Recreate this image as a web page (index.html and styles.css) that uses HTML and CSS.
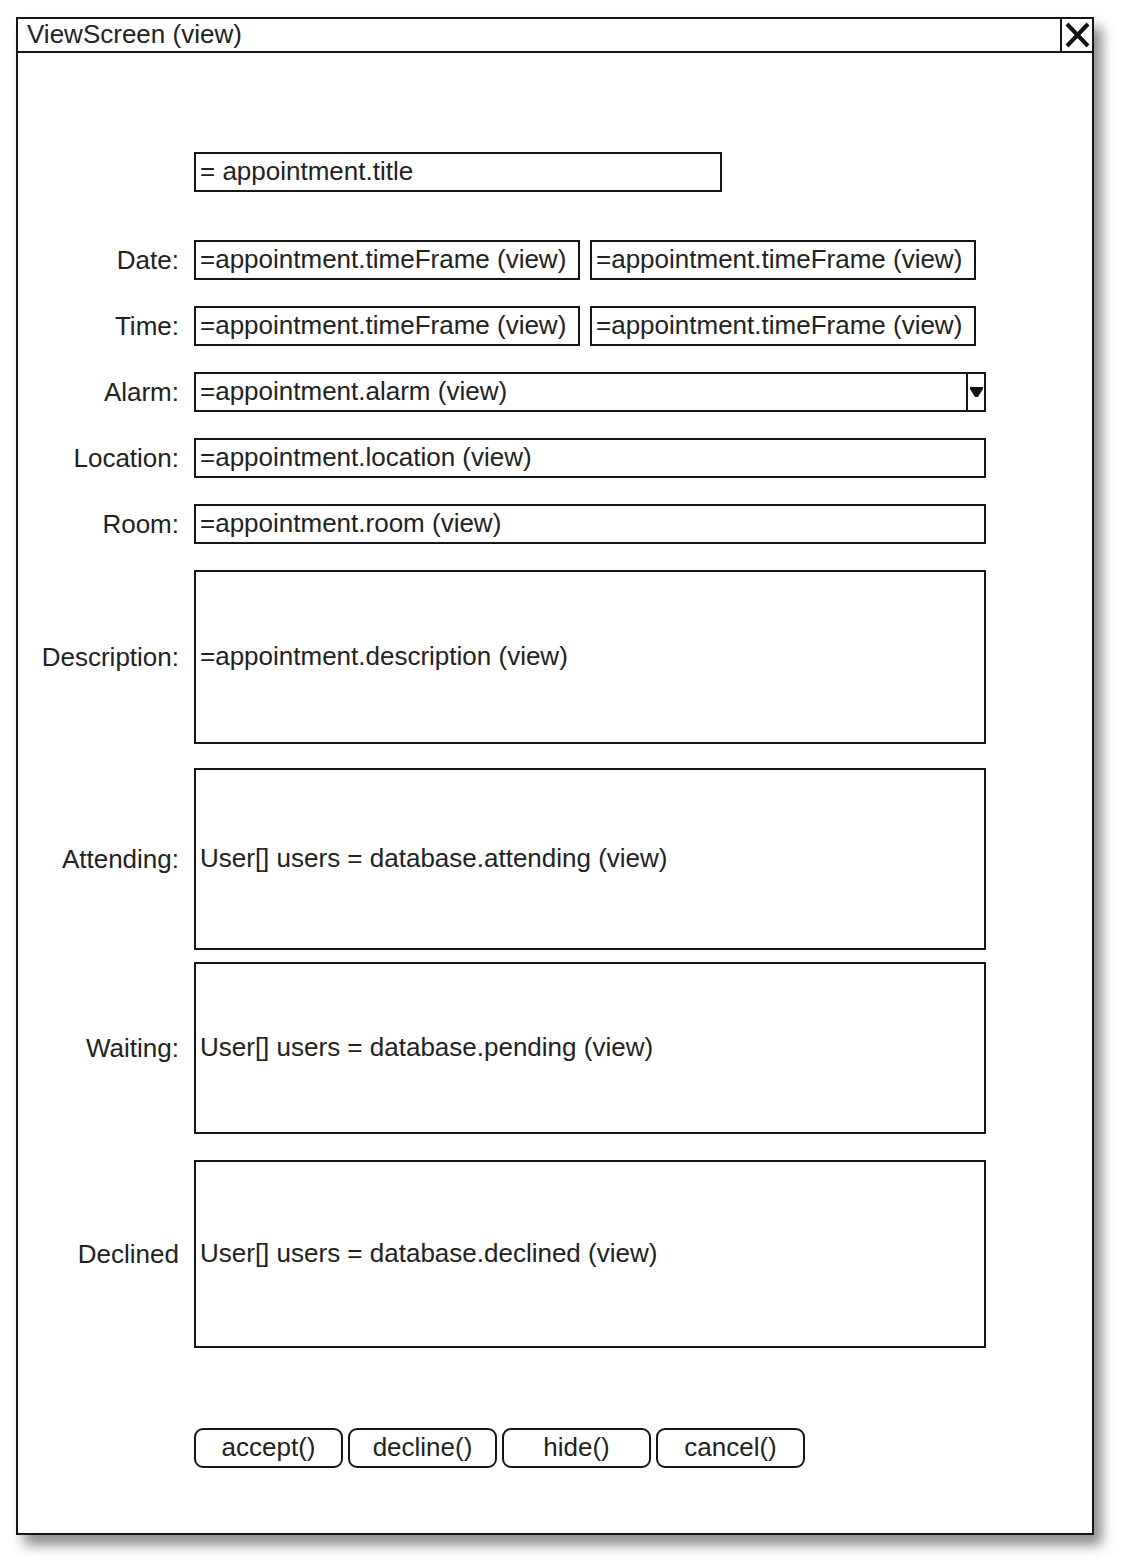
FILE: index.html
```html
<!DOCTYPE html>
<html lang="en">

<head>
    <meta charset="UTF-8">
    <meta name="viewport" content="width=device-width, initial-scale=1.0">
    <title>ViewScreen (view)</title>
    <link rel="stylesheet" href="styles.css">
</head>

<body>
    <div class="window">
        <div class="titlebar">
            <span class="title">ViewScreen (view)</span>
            <div class="close">
                <svg width="30" height="32" viewBox="0 0 30 32">
                    <path d="M5 5 L26 27 M26 5 L5 27" stroke="#111" stroke-width="4" fill="none" />
                </svg>
            </div>
        </div>

        <div class="content">
            <div class="row row-title">
                <span class="label"></span>
                <div class="field field-title">= appointment.title</div>
            </div>
            <div class="row row-date">
                <span class="label">Date:</span>
                <div class="pair">
                    <div class="field">=appointment.timeFrame (view)</div>
                    <div class="field">=appointment.timeFrame (view)</div>
                </div>
            </div>
            <div class="row">
                <span class="label">Time:</span>
                <div class="pair">
                    <div class="field">=appointment.timeFrame (view)</div>
                    <div class="field">=appointment.timeFrame (view)</div>
                </div>
            </div>
            <div class="row">
                <span class="label">Alarm:</span>
                <div class="field field-select">
                    <span class="value">=appointment.alarm (view)</span>
                    <span class="drop">
                        <svg width="13" height="12" viewBox="0 0 13 12">
                            <path d="M0 1 L13 1 L13 3 L8 11 L5 11 L0 3 Z" fill="#111" />
                        </svg>
                    </span>
                </div>
            </div>
            <div class="row">
                <span class="label">Location:</span>
                <div class="field">=appointment.location (view)</div>
            </div>
            <div class="row">
                <span class="label">Room:</span>
                <div class="field">=appointment.room (view)</div>
            </div>
            <div class="row">
                <span class="label">Description:</span>
                <div class="field area area-description">=appointment.description (view)</div>
            </div>
            <div class="row row-attending">
                <span class="label">Attending:</span>
                <div class="field area area-attending">User[] users = database.attending (view)</div>
            </div>
            <div class="row row-waiting">
                <span class="label">Waiting:</span>
                <div class="field area area-waiting">User[] users = database.pending (view)</div>
            </div>
            <div class="row">
                <span class="label">Declined</span>
                <div class="field area area-declined">User[] users = database.declined (view)</div>
            </div>
            <div class="row row-buttons">
                <span class="label"></span>
                <div class="buttons">
                    <button>accept()</button>
                    <button>decline()</button>
                    <button>hide()</button>
                    <button>cancel()</button>
                </div>
            </div>
        </div>
    </div>
</body>

</html>
```

FILE: styles.css
```css
body {
    font-family: 'Liberation Sans', Arial, sans-serif;
    margin: 0;
    padding: 17px 0 27px 16px;
    background-color: #fff;
    color: #222;
}

.window {
    box-sizing: border-box;
    width: 1078px;
    height: 1518px;
    border: 2px solid #151515;
    background-color: #fff;
    box-shadow: 8px 10px 12px rgba(0, 0, 0, 0.45);
}

.titlebar {
    box-sizing: border-box;
    height: 34px;
    display: flex;
    align-items: center;
    border-bottom: 2px solid #151515;
}

.title {
    flex: 1;
    padding-left: 9px;
    font-size: 26px;
    line-height: 30px;
    margin-top: -2px;
}

.close {
    box-sizing: border-box;
    width: 32px;
    height: 32px;
    border-left: 2px solid #151515;
}

.close svg {
    display: block;
}

.content {
    display: flex;
    flex-direction: column;
    padding-top: 99px;
}

.row {
    display: flex;
    align-items: center;
    margin-top: 26px;
    font-size: 26px;
}

.row-title {
    margin-top: 0;
}

.row-date {
    margin-top: 48px;
}

.row-attending {
    margin-top: 24px;
}

.row-waiting {
    margin-top: 12px;
}

.row-buttons {
    margin-top: 80px;
}

.label {
    width: 161px;
    margin-right: 15px;
    text-align: right;
    white-space: nowrap;
}

.field {
    box-sizing: border-box;
    width: 792px;
    height: 40px;
    display: flex;
    align-items: center;
    padding: 0 4px 2px;
    border: 2px solid #151515;
    white-space: nowrap;
    overflow: hidden;
}

.field-title {
    width: 528px;
}

.pair {
    display: flex;
    gap: 10px;
}

.pair .field {
    width: 386px;
}

.field-select {
    padding-right: 0;
    padding-bottom: 0;
}

.field-select .value {
    flex: 1;
    margin-bottom: 2px;
}

.drop {
    box-sizing: border-box;
    width: 18px;
    height: 100%;
    border-left: 2px solid #151515;
    display: flex;
    justify-content: center;
    align-items: center;
}

.drop svg {
    display: block;
}

.area-description {
    height: 174px;
}

.area-attending {
    height: 182px;
}

.area-waiting {
    height: 172px;
}

.area-declined {
    height: 188px;
}

.buttons {
    display: flex;
    gap: 5px;
}

.buttons button {
    box-sizing: border-box;
    width: 149px;
    height: 40px;
    padding: 0 0 2px;
    font-family: inherit;
    font-size: 26px;
    color: #222;
    background-color: #fff;
    border: 2px solid #151515;
    border-radius: 9px;
}
```
